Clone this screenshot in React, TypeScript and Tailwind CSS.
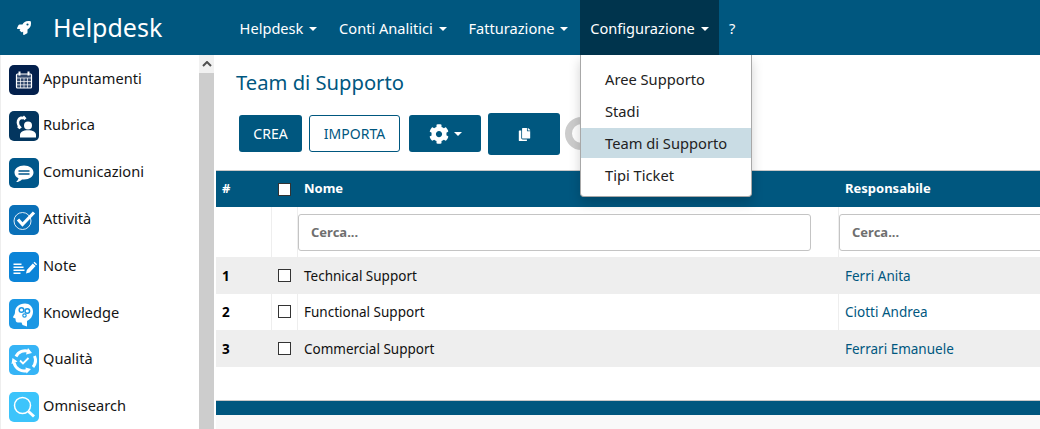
import React from "react";
import { FaRocket, FaCog, FaCopy } from "react-icons/fa";

const font = { fontFamily: '"Noto Sans", "Open Sans", sans-serif' };

function Caret() {
  return <span className="ml-[6px] inline-block h-0 w-0 border-x-[4px] border-t-[4px] border-x-transparent border-t-current align-middle" />;
}

function NavItem({ label, active, w }: { label: string; active?: boolean; w: string }) {
  return (
    <div className={`flex h-[55px] items-center justify-center pt-[2px] text-[14.6px] text-white ${w} ${active ? "bg-[#00344d]" : "pr-[2px]"}`}>
      {label}
      <Caret />
    </div>
  );
}

const W = "#ffffff";
const icons: Record<string, React.ReactNode> = {
  cal: (
    <g fill="none" stroke={W} strokeWidth="1.2">
      <rect x="7.5" y="9" width="15" height="14" rx="1" fill="#ffffff" fillOpacity="0.18" />
      <path d="M7.5 13h15M7.5 16.500h15M7.5 19.800h15M11.500 13v10M15 13v10M18.500 13v10" strokeWidth="0.7" />
      <path d="M10.500 6.500v4M19.500 6.500v4" strokeWidth="2" />
    </g>
  ),
  phone: (
    <g fill={W}>
      <path d="M15.500 6.500c-2.500-1.500-5-1-6.500.8-2 2.500-1.800 6.200.5 9.200l2-1.300c-1.500-2-1.800-4.500-.6-6 .7-.8 1.800-1.100 3-.7z" />
      <path d="M15 4.500l2.500 2.800-2.200 2-2.300-2.800zM8 16l2.800-1.800 2 2.300-2.500 1.800z" />
      <circle cx="19" cy="14.500" r="4" />
      <path d="M11 26.500v-2.500c0-3 3-4.800 8-4.800s8 1.800 8 4.800v2.500z" />
    </g>
  ),
  chat: (
    <g>
      <path d="M15 7.500c-5.500 0-9.500 3-9.500 7 0 2.500 1.500 4.600 4 5.800-.3 1.500-1.200 2.800-2.500 3.700 2.500 0 4.700-1.100 6-2.600.7.100 1.300.1 2 .1 5.500 0 9.500-3 9.500-7s-4-7-9.500-7z" fill={W} />
      <path d="M9.500 13h11M9.500 16h11" stroke="#00578a" strokeWidth="1.600" />
    </g>
  ),
  check: (
    <g fill="none" stroke={W}>
      <circle cx="13.500" cy="16" r="8.500" strokeWidth="1" opacity="0.85" />
      <path d="M9 14.500l4.500 5L25 7.500" strokeWidth="3.200" />
    </g>
  ),
  note: (
    <g fill={W}>
      <path d="M4.500 11.500h8v1.500h-8zM4.500 14.500h10v1.500h-10zM4.500 17.500h11v1.500h-11zM4.500 20.500h7v1.500h-7z" />
      <path d="M17 21.500l.8-3.500 6-6.500 2.800 2.500-6 6.500zM24.500 10.800l1-1 2.600 2.500-1 1z" />
    </g>
  ),
  head: (
    <g>
      <path d="M16 4.500C10 4.500 6 8.500 6 13c0 1.500-.3 2.500-1.500 4-.6.900-.6 1.700.5 2l1.500.5c0 2.500.5 4 2.500 4h3.500l1 2.500 4.500 1.500v-5.500c3.500-1.500 6-5 6-9.500 0-4.500-3.500-8-8-8z" fill={W} />
      <circle cx="12.500" cy="11" r="2.300" fill="none" stroke="#1b97e4" strokeWidth="1.500" />
      <circle cx="18.300" cy="12" r="2.300" fill="none" stroke="#1b97e4" strokeWidth="1.500" />
      <circle cx="15.500" cy="16.500" r="1.700" fill="none" stroke="#1b97e4" strokeWidth="1.200" />
    </g>
  ),
  cycle: (
    <g>
      <g fill="none" stroke={W} strokeWidth="3">
        <path d="M7 11.500A10 10 0 0 1 20 6.500" />
        <path d="M25.500 11A10.500 10.500 0 0 1 24 22" />
        <path d="M18.500 25.500A10.500 10.500 0 0 1 5 17.500" />
      </g>
      <path d="M19 3l4 5-6 1.500zM22 24l-4.500 4.500-1-6zM2.500 19l1-6 5 3.500z" fill={W} />
      <path d="M11 15.500l3 3 5.500-5.500" fill="none" stroke={W} strokeWidth="1.800" />
    </g>
  ),
  search: (
    <g fill="none" stroke={W}>
      <circle cx="13.500" cy="13.500" r="8" strokeWidth="1.500" />
      <path d="M19.500 19.500l5.500 5" strokeWidth="3" />
    </g>
  ),
};

const sideItems = [
  ["Appuntamenti", "bg-[#03204c]", "cal", "mb-[16px]"],
  ["Rubrica", "bg-[#03365f]", "phone", "mb-[17px]"],
  ["Comunicazioni", "bg-[#00578a]", "chat", "mb-[17px]"],
  ["Attività", "bg-[#0a70b8]", "check", "mb-[17px]"],
  ["Note", "bg-[#0b84d8]", "note", "mb-[17px]"],
  ["Knowledge", "bg-[#1b97e4]", "head", "mb-[16px]"],
  ["Qualità", "bg-[#36b4f6]", "cycle", "mb-[17px]"],
  ["Omnisearch", "bg-[#3cc4fb]", "search", "mb-[17px]"],
];

function SideItem({ label, bg, icon, mb }: { label: string; bg: string; icon: string; mb: string }) {
  return (
    <div className={`flex h-[30px] shrink-0 items-center gap-[4px] pl-[8px] ${mb}`}>
      <div className={`h-[30px] w-[30px] shrink-0 rounded-[5px] ${bg}`}>
        <svg viewBox="0 0 30 30" className="h-[30px] w-[30px]">
          {icons[icon]}
        </svg>
      </div>
      <span className="pb-[2px] text-[14.6px] text-[#151515]">{label}</span>
    </div>
  );
}

function Box() {
  return <span className="block h-[13px] w-[13px] border border-[#333] bg-white" />;
}

const cols = "grid grid-cols-[56px_26px_541px_1fr]";

function Row({ n, name, owner, odd }: { n: number; name: string; owner: string; odd: boolean }) {
  return (
    <div className={`${cols} h-[36.500px] items-stretch text-[13.5px] ${odd ? "bg-[#eeeeee]" : "bg-white"}`}>
      <div className={`flex items-center pl-[6px] pt-[1px] font-bold text-black ${odd ? "" : "border-r border-[#eeeeee]"}`}>{n}</div>
      <div className={`flex items-center pl-[6px] ${odd ? "" : "border-r border-[#eeeeee]"}`}><Box /></div>
      <div className={`flex items-center pl-[6px] pt-[1px] text-[#111] ${odd ? "" : "border-r border-[#eeeeee]"}`}>{name}</div>
      <div className="flex items-center pl-[6px] pt-[1px] text-[#00577f]">{owner}</div>
    </div>
  );
}

function Search({ w }: { w: string }) {
  return (
    <div className={`flex h-[37px] items-center rounded-[3px] border border-[#c4c4c4] bg-white pl-[12px] text-[13px] font-bold text-[#6f6f6f] ${w}`}>
      Cerca...
    </div>
  );
}

export default function App() {
  return (
    <div className="flex h-[429px] w-[1040px] flex-col overflow-hidden bg-white" style={font}>
      <header className="flex h-[55px] shrink-0 items-center bg-[#00577f]">
        <div className="flex w-[230px] items-center">
          <FaRocket className="ml-[17px] h-[14px] w-[14px] text-white" />
          <span className="ml-[22px] text-[25px] leading-none text-white">Helpdesk</span>
        </div>
        <NavItem label="Helpdesk" w="w-[99px]" />
        <NavItem label="Conti Analitici" w="w-[130px]" />
        <NavItem label="Fatturazione" w="w-[121px]" />
        <NavItem label="Configurazione" active w="w-[139px]" />
        <div className="flex h-[55px] items-center px-[10px] pt-[2px] text-[14.6px] text-white">?</div>
      </header>
      <div className="relative flex min-h-0 flex-1">
        <aside className="flex w-[216px] shrink-0">
          <div className="flex w-[199px] flex-col border-l border-[#eeeeee] pt-[10px]">
            {sideItems.map(([l, b, i, m]) => (
              <SideItem key={l} label={l} bg={b} icon={i} mb={m} />
            ))}
          </div>
          <div className="w-[15px] bg-[#cdcdcd]">
            <div className="flex h-[18px] items-center justify-center bg-[#f1f1f1]">
              <svg viewBox="0 0 10 6" className="h-[6px] w-[10px]">
                <path d="M1 5l4-4 4 4" fill="none" stroke="#505050" strokeWidth="2" />
              </svg>
            </div>
          </div>
        </aside>
        <main className="flex min-w-0 flex-1 flex-col">
          <h1 className="pl-[20px] pt-[14px] text-[20.2px] font-normal leading-[27px] text-[#00577f]">Team di Supporto</h1>
          <div className="relative flex h-[74px] items-start pl-[23px] pt-[19px]">
            <div className="flex h-[37px] w-[63px] items-center justify-center rounded-[3px] bg-[#00577f] text-[14px] text-white">CREA</div>
            <div className="ml-[7px] flex h-[37px] w-[91px] items-center justify-center rounded-[3px] border border-[#00577f] text-[14px] text-[#00577f]">IMPORTA</div>
            <div className="ml-[9px] flex h-[37px] w-[72px] items-center justify-center rounded-[3px] bg-[#00577f] text-white">
              <FaCog className="h-[20px] w-[20px]" />
              <span className="ml-[5px] inline-block h-0 w-0 border-x-[4px] border-t-[4px] border-x-transparent border-t-white" />
            </div>
            <div className="ml-[7px] -mt-[2px] flex h-[42px] w-[72px] items-center justify-center rounded-[3px] bg-[#00577f] text-white">
              <FaCopy className="h-[13px] w-[13px]" />
            </div>
            <div className="absolute left-[349px] top-[21px] h-[33px] w-[33px] rounded-full border-[7px] border-[#cccccc]" />
          </div>
          <div className="border-t border-[#c8c8c8]">
            <div className={`${cols} h-[36px] items-center bg-[#00577f] text-[13px] font-bold text-white`}>
              <div className="pl-[6px]">#</div>
              <div className="pl-[6px]"><Box /></div>
              <div className="pl-[6px]">Nome</div>
              <div className="pl-[6px]">Responsabile</div>
            </div>
            <div className={`${cols} h-[50px]`}>
              <div className="border-r border-[#eeeeee]" />
              <div className="border-r border-[#eeeeee]" />
              <div className="border-r border-[#eeeeee] pt-[7px]"><Search w="w-[513px]" /></div>
              <div className="pt-[7px]"><Search w="w-[260px]" /></div>
            </div>
            <Row n={1} name="Technical Support" owner="Ferri Anita" odd />
            <Row n={2} name="Functional Support" owner="Ciotti Andrea" odd={false} />
            <Row n={3} name="Commercial Support" owner="Ferrari Emanuele" odd />
          </div>
          <div className="h-[33px] shrink-0" />
          <div className="h-[15px] shrink-0 border-t border-[#c8c8c8] bg-[#00577f]" />
          <div className="flex-1 bg-[#f9f9f9]" />
        </main>
        <div className="absolute left-[580px] top-0 h-[142px] w-[172px] rounded-b-[4px] border border-t-0 border-[#a8a8a8] bg-white pt-[9px] text-[14.7px] text-[#222] shadow-[0_6px_12px_rgba(0,0,0,0.18)]">
          <div className="flex h-[32px] items-center pb-[2px] pl-[24px]">Aree Supporto</div>
          <div className="flex h-[32px] items-center pb-[2px] pl-[24px]">Stadi</div>
          <div className="flex h-[30px] items-center bg-[#c9dce4] pl-[24px]">Team di Supporto</div>
          <div className="flex h-[35px] items-center pl-[24px]">Tipi Ticket</div>
        </div>
      </div>
    </div>
  );
}
